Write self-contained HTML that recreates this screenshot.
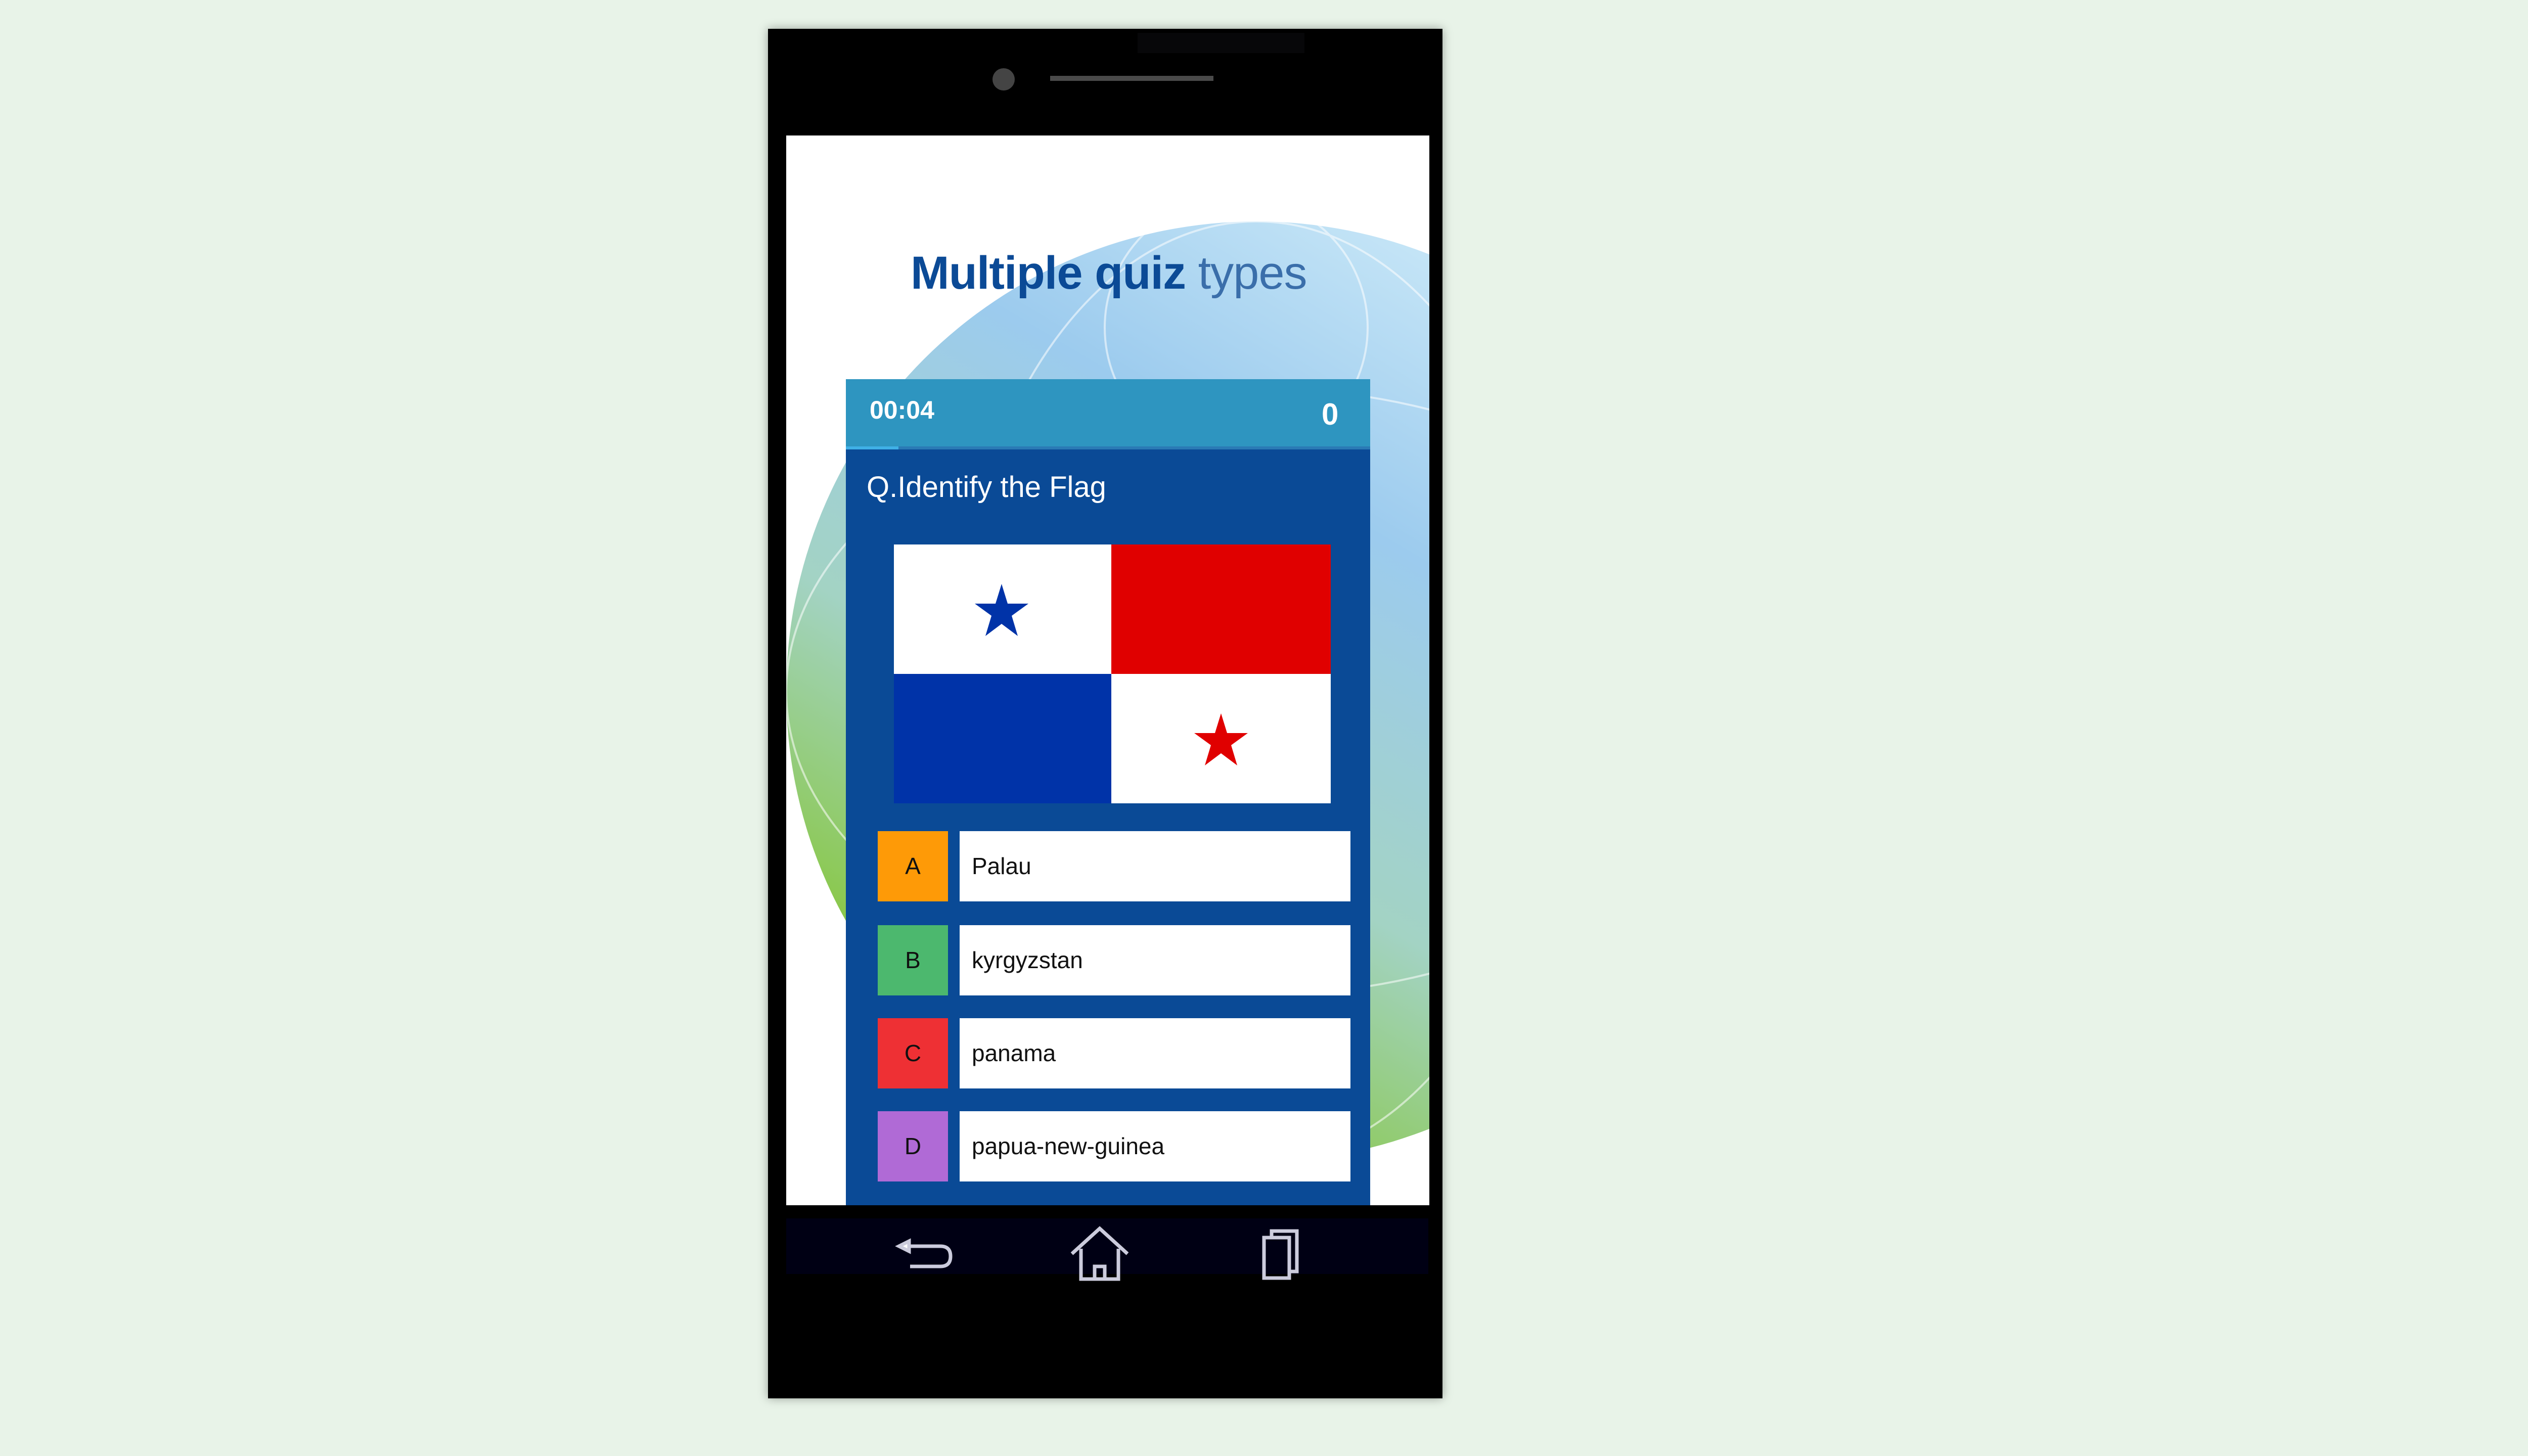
<!DOCTYPE html>
<html><head><meta charset="utf-8"><style>
html,body{margin:0;padding:0}
body{width:5120px;height:2880px;background:#e8f3e8;position:relative;overflow:hidden;font-family:"Liberation Sans",sans-serif}
.abs{position:absolute}
#phone{left:1519px;top:57px;width:1334px;height:2709px;background:#000;box-shadow:0 0 18px rgba(0,0,0,0.35)}
#screen{left:1555px;top:268px;width:1272px;height:2116px;background:#fff;overflow:hidden}
.opt{position:absolute;left:1736px;width:935px;height:139px}
.opt .l{position:absolute;left:0;top:0;width:139px;height:139px;font-size:46px;color:#111;text-align:center;line-height:139px}
.opt .t{position:absolute;left:162px;top:0;width:773px;height:139px;background:#fff;font-size:46px;color:#111;line-height:139px;padding-left:24px;box-sizing:border-box}
</style></head><body>
<div id="phone" class="abs"></div>
<div class="abs" style="left:2250px;top:65px;width:330px;height:40px;background:#070709"></div>
<div class="abs" style="left:1963px;top:135px;width:44px;height:44px;border-radius:50%;background:#444"></div>
<div class="abs" style="left:2077px;top:150px;width:323px;height:10px;background:#4a4a4a"></div>
<div id="screen" class="abs">
<svg width="1272" height="2116" style="position:absolute;left:0;top:0">
<defs><linearGradient id="g" x1="0.75" y1="0" x2="0.15" y2="1">
<stop offset="0" stop-color="#cdeaf8"/><stop offset="0.3" stop-color="#9ccbee"/><stop offset="0.6" stop-color="#a3d3c4"/><stop offset="0.85" stop-color="#8ac84a"/></linearGradient></defs>
<circle cx="930" cy="1100" r="930" fill="url(#g)"/>
<g stroke="#fff" stroke-width="4" fill="none" opacity="0.55">
<ellipse cx="930" cy="1100" rx="930" ry="600"/>
<ellipse cx="930" cy="1100" rx="600" ry="930"/>
<circle cx="890" cy="380" r="260"/>
</g>
</svg>
<div class="abs" style="left:246px;top:220px;font-size:92px;color:#0b4a96;white-space:nowrap;letter-spacing:-1px"><b>Multiple quiz</b> <span style="color:#3a6eaa">types</span></div>
</div>
<div class="abs" style="left:1673px;top:750px;width:1037px;height:1634px;background:#0a4a96"></div>
<div class="abs" style="left:1673px;top:750px;width:1037px;height:135px;background:#2e95c0"></div>
<div class="abs" style="left:1673px;top:883px;width:1037px;height:6px;background:#2a7ab5"></div>
<div class="abs" style="left:1673px;top:883px;width:104px;height:6px;background:#3fb0e6"></div>
<div class="abs" style="left:1720px;top:782px;font-size:50px;font-weight:bold;color:#fff">00:04</div>
<div class="abs" style="left:2614px;top:785px;font-size:60px;font-weight:bold;color:#fff">0</div>
<div class="abs" style="left:1714px;top:930px;font-size:58px;color:#fff">Q.Identify the Flag</div>
<svg class="abs" style="left:1768px;top:1077px" width="864" height="512">
<rect x="0" y="0" width="430" height="256" fill="#fff"/>
<rect x="430" y="0" width="434" height="256" fill="#e00000"/>
<rect x="0" y="256" width="430" height="256" fill="#0033a8"/>
<rect x="430" y="256" width="434" height="256" fill="#fff"/>
<polygon points="213,78 225,117 266,117 233,141 245,181 213,157 181,181 193,141 160,117 201,117" fill="#0033a8"/>
<polygon points="647,334 659,373 700,373 667,397 679,437 647,413 615,437 627,397 594,373 635,373" fill="#e00000"/>
</svg>
<div class="opt" style="top:1644px"><div class="l" style="background:#fe9a07">A</div><div class="t">Palau</div></div>
<div class="opt" style="top:1830px"><div class="l" style="background:#4cb86e">B</div><div class="t">kyrgyzstan</div></div>
<div class="opt" style="top:2014px"><div class="l" style="background:#ee3034">C</div><div class="t">panama</div></div>
<div class="opt" style="top:2198px"><div class="l" style="background:#b06ad6">D</div><div class="t">papua-new-guinea</div></div>
<div class="abs" style="left:1555px;top:2410px;width:1270px;height:110px;background:#000014"></div>
<svg class="abs" style="left:1770px;top:2420px" width="900" height="140" fill="none" stroke="#ccd" stroke-width="7">
<path d="M10 45 H90 Q110 45 110 65 Q110 85 90 85 H30"/><path d="M8 45 L28 35 L28 55 Z" fill="#fff"/>
<path d="M350 60 L405 10 L460 60 M368 50 V110 H442 V50 M395 110 V85 H415 V110"/>
<rect x="730" y="28" width="50" height="80"/><path d="M745 28 V15 H795 V95 H780"/>
</svg>
</body></html>
